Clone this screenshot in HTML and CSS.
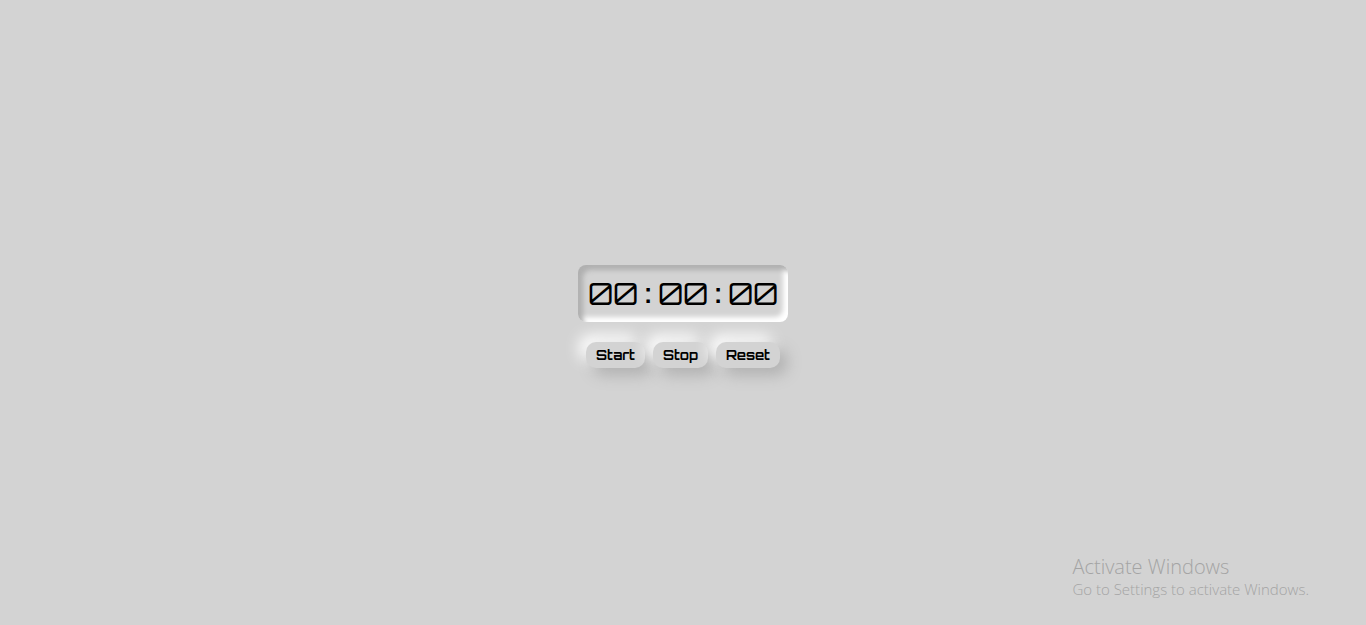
FILE: index.html
```html
<!DOCTYPE html>
<html lang="en">
<head>
<meta charset="utf-8">
<meta name="viewport" content="width=device-width, initial-scale=1">
<title>Stopwatch</title>
<link rel="stylesheet" href="styles.css">
</head>
<body>
<main class="stopwatch">
  <div class="display" role="timer">
    <span class="digit">0</span><span class="digit">0</span><span class="colon">:</span><span class="digit">0</span><span class="digit">0</span><span class="colon">:</span><span class="digit">0</span><span class="digit">0</span>
  </div>
  <div class="controls">
    <button class="button" type="button">Start</button>
    <button class="button" type="button">Stop</button>
    <button class="button" type="button">Reset</button>
  </div>
</main>
<aside class="watermark">
  <p class="watermark-title">Activate Windows</p>
  <p class="watermark-text">Go to Settings to activate Windows.</p>
</aside>
</body>
</html>
```

FILE: styles.css
```css
* {
  box-sizing: border-box;
}

body {
  margin: 0;
  min-height: 100vh;
  display: flex;
  align-items: center;
  justify-content: center;
  background: #d3d3d3;
  color: #000;
  font-family: Orbitron, "DejaVu Sans", sans-serif;
}

.stopwatch {
  display: flex;
  flex-direction: column;
  align-items: center;
  gap: 20px;
  padding-top: 8px;
}

.display {
  display: flex;
  padding: 10px;
  border-radius: 8px;
  box-shadow: inset 5px 5px 5px #b0b0b0, inset -5px -5px 5px #fff;
  font-family: Orbitron, Inter, sans-serif;
  font-feature-settings: "zero";
  font-size: 30px;
  font-weight: 400;
  line-height: 37px;
  text-align: center;
}

.digit {
  width: 25px;
}

.colon {
  width: 20px;
  font-size: 26px;
  font-weight: 700;
}

.controls {
  display: flex;
  gap: 8px;
}

.button {
  padding: 5px 10px;
  border: 0;
  border-radius: 10px;
  background: #d3d3d3;
  box-shadow: 7px 7px 15px #b0b0b0, -7px -7px 15px #fff;
  color: #000;
  font-family: inherit;
  font-weight: 700;
  line-height: 16px;
}

.watermark {
  position: absolute;
  right: 57px;
  bottom: 26px;
  color: #a4a4a4;
  font-family: "Segoe UI", "Open Sans", sans-serif;
  font-weight: 300;
}

.watermark-title,
.watermark-text {
  margin: 0;
}

.watermark-title {
  font-size: 20px;
  line-height: 25px;
}

.watermark-text {
  font-size: 15px;
  line-height: 20px;
}
```
